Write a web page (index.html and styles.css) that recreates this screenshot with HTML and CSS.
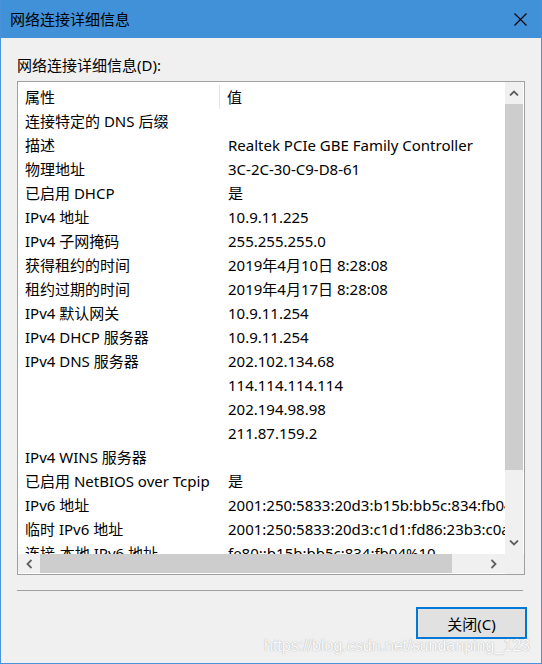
FILE: index.html
```html
<!DOCTYPE html>
<html lang="zh-CN">
<head>
    <meta charset="UTF-8">
    <title>网络连接详细信息</title>
    <link rel="stylesheet" href="styles.css">
</head>
<body>
    <div class="window">
        <div class="titlebar">
            <span class="title">网络连接详细信息</span>
            <svg class="close" width="13" height="13" viewBox="0 0 13 13">
                <path d="M0.5 0.5 L12.5 12.5 M12.5 0.5 L0.5 12.5" stroke="#000" stroke-width="1.1" fill="none"/>
            </svg>
        </div>
        <div class="content">
            <div class="label">网络连接详细信息(D):</div>
            <div class="listbox">
                <div class="view">
                    <div class="row head">
                        <div class="name">属性</div>
                        <div class="value">值</div>
                    </div>
                    <div class="row"><div class="name">连接特定的 DNS 后缀</div><div class="value"></div></div>
                    <div class="row"><div class="name">描述</div><div class="value">Realtek PCIe GBE Family Controller</div></div>
                    <div class="row"><div class="name">物理地址</div><div class="value">3C-2C-30-C9-D8-61</div></div>
                    <div class="row"><div class="name">已启用 DHCP</div><div class="value">是</div></div>
                    <div class="row"><div class="name">IPv4 地址</div><div class="value">10.9.11.225</div></div>
                    <div class="row"><div class="name">IPv4 子网掩码</div><div class="value">255.255.255.0</div></div>
                    <div class="row"><div class="name">获得租约的时间</div><div class="value">2019年4月10日 8:28:08</div></div>
                    <div class="row"><div class="name">租约过期的时间</div><div class="value">2019年4月17日 8:28:08</div></div>
                    <div class="row"><div class="name">IPv4 默认网关</div><div class="value">10.9.11.254</div></div>
                    <div class="row"><div class="name">IPv4 DHCP 服务器</div><div class="value">10.9.11.254</div></div>
                    <div class="row"><div class="name">IPv4 DNS 服务器</div><div class="value">202.102.134.68</div></div>
                    <div class="row"><div class="name"></div><div class="value">114.114.114.114</div></div>
                    <div class="row"><div class="name"></div><div class="value">202.194.98.98</div></div>
                    <div class="row"><div class="name"></div><div class="value">211.87.159.2</div></div>
                    <div class="row"><div class="name">IPv4 WINS 服务器</div><div class="value"></div></div>
                    <div class="row"><div class="name">已启用 NetBIOS over Tcpip</div><div class="value">是</div></div>
                    <div class="row"><div class="name">IPv6 地址</div><div class="value">2001:250:5833:20d3:b15b:bb5c:834:fb04</div></div>
                    <div class="row"><div class="name">临时 IPv6 地址</div><div class="value">2001:250:5833:20d3:c1d1:fd86:23b3:c0a1</div></div>
                    <div class="row"><div class="name">连接-本地 IPv6 地址</div><div class="value">fe80::b15b:bb5c:834:fb04%10</div></div>
                </div>
                <div class="vbar">
                    <div class="arrow">
                        <svg width="10" height="6" viewBox="0 0 10 6"><polyline points="1,5.5 5,1.5 9,5.5" fill="none" stroke="#606060" stroke-width="1.8"/></svg>
                    </div>
                    <div class="track"><div class="vthumb"></div></div>
                    <div class="arrow">
                        <svg width="10" height="6" viewBox="0 0 10 6"><polyline points="1,0.5 5,4.5 9,0.5" fill="none" stroke="#606060" stroke-width="1.8"/></svg>
                    </div>
                </div>
                <div class="hbar">
                    <div class="arrow">
                        <svg width="6" height="10" viewBox="0 0 6 10"><polyline points="5.5,1 1.5,5 5.5,9" fill="none" stroke="#606060" stroke-width="1.8"/></svg>
                    </div>
                    <div class="track"><div class="hthumb"></div></div>
                    <div class="arrow">
                        <svg width="6" height="10" viewBox="0 0 6 10"><polyline points="0.5,1 4.5,5 0.5,9" fill="none" stroke="#606060" stroke-width="1.8"/></svg>
                    </div>
                </div>
                <div class="corner"></div>
            </div>
            <div class="separator"></div>
            <button class="btn">关闭(C)</button>
        </div>
        <div class="watermark">https://blog.csdn.net/sundanping_123</div>
    </div>
</body>
</html>
```

FILE: styles.css
```css
body {
    margin: 0;
    font-family: "Noto Sans", "Noto Sans CJK SC", sans-serif;
    font-size: 15px;
    color: #000;
    background: #fff;
}
.window {
    position: relative;
    width: 542px;
    height: 664px;
    box-sizing: border-box;
    background: #f0f0f0;
    border: 1px solid #4a93da;
    border-top: none;
    display: flex;
    flex-direction: column;
}
.titlebar {
    height: 38px;
    background: #4191d8;
    display: flex;
    align-items: center;
    justify-content: space-between;
    padding: 0 14px 0 9px;
}
.title {
    line-height: 20px;
}
.content {
    display: flex;
    flex-direction: column;
    padding: 0 16px;
}
.label {
    margin-top: 17px;
    line-height: 20px;
    height: 20px;
}
.listbox {
    margin-top: 6px;
    width: 508px;
    height: 494px;
    box-sizing: border-box;
    border: 1px solid #a0a0a0;
    background: #fff;
    display: grid;
    grid-template-columns: 1fr 19px;
    grid-template-rows: 1fr 20px;
}
.view {
    overflow: hidden;
    padding-top: 3px;
    white-space: nowrap;
}
.row {
    display: flex;
    height: 24px;
    line-height: 24px;
}
.name {
    width: 195px;
    flex: none;
    padding-left: 7px;
}
.value {
    padding-left: 8px;
}
.head .name {
    border-right: 1px solid #e5e5e5;
    width: 194px;
}
.head .value {
    padding-left: 7px;
}
.vbar {
    background: #f0f0f0;
    display: grid;
    grid-template-rows: 22px 1fr 22px;
    margin-right: 1px;
}
.hbar {
    background: #f0f0f0;
    display: grid;
    grid-template-columns: 22px 1fr 22px;
    margin-bottom: 1px;
}
.arrow {
    display: flex;
    align-items: center;
    justify-content: center;
}
.vthumb {
    height: 366px;
    background: #cdcdcd;
}
.hthumb {
    width: 412px;
    height: 100%;
    background: #cdcdcd;
}
.corner {
    background: #f0f0f0;
}
.separator {
    margin-top: 15px;
    width: 506px;
    border-top: 1px solid #a0a0a0;
}
.btn {
    align-self: flex-end;
    margin: 16px -2px 0 0;
    width: 111px;
    height: 32px;
    background: #e1e1e1;
    border: 2px solid #0078d7;
    font-family: inherit;
    font-size: 15px;
    color: #000;
    padding: 0;
}
.watermark {
    position: absolute;
    right: 11px;
    bottom: 8px;
    font-family: "Liberation Sans", Arial, sans-serif;
    font-size: 16px;
    color: #fbfbfb;
    text-shadow: 0 0 1px #b8b8b8, 0 0 1px #b8b8b8;
}
```
